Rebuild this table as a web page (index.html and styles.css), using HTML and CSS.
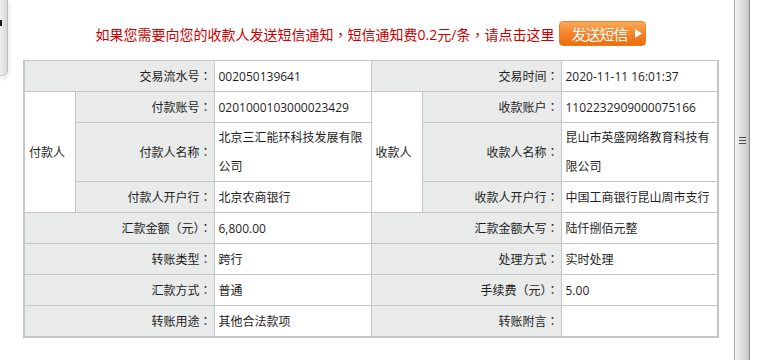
FILE: index.html
```html
<!DOCTYPE html>
<html lang="zh-CN">
<head>
  <meta charset="UTF-8">
  <meta name="viewport" content="width=device-width, initial-scale=1.0">
  <title>转账详情</title>
  <link rel="stylesheet" href="styles.css">
</head>
<body>
  <div class="side"><div class="side-tab"></div></div>

  <div class="page">
    <div class="notice">
      <span class="notice-text">如果您需要向您的收款人发送短信通知<span class="pt">，</span>短信通知费0.2元/条<span class="pt">，</span>请点击这里</span>
      <button class="sms-btn">
        <span>发送短信</span>
        <svg width="7" height="9" viewBox="0 0 7 9"><polygon points="0,0 7,4.5 0,9" fill="#fff"/></svg>
      </button>
    </div>

    <table class="detail">
      <colgroup>
        <col class="c-group"><col class="c-label"><col class="c-value">
        <col class="c-group"><col class="c-label"><col class="c-value">
      </colgroup>
      <tr>
        <th colspan="2">交易流水号<span class="pt">：</span></th><td>002050139641</td>
        <th colspan="2">交易时间<span class="pt">：</span></th><td>2020-11-11 16:01:37</td>
      </tr>
      <tr>
        <td class="party" rowspan="3">付款人</td><th>付款账号<span class="pt">：</span></th><td>0201000103000023429</td>
        <td class="party" rowspan="3">收款人</td><th>收款账户<span class="pt">：</span></th><td>1102232909000075166</td>
      </tr>
      <tr>
        <th>付款人名称<span class="pt">：</span></th><td>北京三汇能环科技发展有限公司</td>
        <th>收款人名称<span class="pt">：</span></th><td>昆山市英盛网络教育科技有限公司</td>
      </tr>
      <tr>
        <th>付款人开户行<span class="pt">：</span></th><td>北京农商银行</td>
        <th>收款人开户行<span class="pt">：</span></th><td>中国工商银行昆山周市支行</td>
      </tr>
      <tr>
        <th colspan="2">汇款金额<span class="pt">（</span>元<span class="pt">）：</span></th><td>6,800.00</td>
        <th colspan="2">汇款金额大写<span class="pt">：</span></th><td>陆仟捌佰元整</td>
      </tr>
      <tr>
        <th colspan="2">转账类型<span class="pt">：</span></th><td>跨行</td>
        <th colspan="2">处理方式<span class="pt">：</span></th><td>实时处理</td>
      </tr>
      <tr>
        <th colspan="2">汇款方式<span class="pt">：</span></th><td>普通</td>
        <th colspan="2">手续费<span class="pt">（</span>元<span class="pt">）：</span></th><td>5.00</td>
      </tr>
      <tr>
        <th colspan="2">转账用途<span class="pt">：</span></th><td>其他合法款项</td>
        <th colspan="2">转账附言<span class="pt">：</span></th><td></td>
      </tr>
    </table>

    <div class="actions">
      <button class="back-btn"></button>
    </div>
  </div>

  <div class="vbar"><span class="grip"></span></div>
  <div class="gutter"></div>
</body>
</html>
```

FILE: styles.css
```css
/* 基础 */
* {
  box-sizing: border-box;
}

body {
  margin: 0;
  height: 360px;
  overflow: hidden;
  display: flex;
  font-family: "Open Sans", "Noto Sans CJK SC", sans-serif;
  font-size: 12px;
  color: #1e1e1e;
  background: #fff;
}

/* 全角标点居中 */
.pt {
  font-family: "Noto Sans CJK TC", "Noto Sans CJK SC", sans-serif;
  font-feature-settings: "locl" 0;
}

/* 左侧折叠条 */
.side {
  width: 8px;
  flex: none;
}

.side-tab {
  position: relative;
  height: 76px;
  background: linear-gradient(to right, #f0f0f0, #d8d8d8);
  border-right: 1px solid #bdbdbd;
  border-bottom: 1px solid #c9c9c9;
  border-radius: 0 0 6px 0;
  box-shadow: 1px 3px 4px rgba(0, 0, 0, 0.1);
}

.side-tab::before {
  content: "";
  position: absolute;
  left: 0;
  top: 20px;
  width: 2px;
  height: 6px;
  background: #1a1a1a;
}

/* 主体 */
.page {
  flex: 1;
  padding-top: 21px;
}

.notice {
  display: flex;
  justify-content: center;
  align-items: center;
  gap: 5px;
  height: 25px;
}

.notice-text {
  color: #cc0000;
  font-size: 14px;
}

.sms-btn {
  display: flex;
  align-items: center;
  gap: 8px;
  width: 87px;
  height: 25px;
  padding: 0 0 0 11px;
  border: 1px solid #ec7f22;
  border-radius: 4px;
  background: linear-gradient(#f9aa58, #f5832a 50%, #ef6c0c);
  color: #fff;
  font-family: inherit;
  font-size: 15px;
  letter-spacing: -1px;
  cursor: pointer;
}

/* 明细表 */
.detail {
  width: 696px;
  margin: 14px auto 0;
  border-collapse: collapse;
  table-layout: fixed;
  border: 2px solid #c6c6c6;
  border-top-width: 1px;
}

.c-group { width: 51px; }
.c-label { width: 139px; }
.c-value { width: 157px; }

.detail th,
.detail td {
  border: 1px solid #c6c6c6;
  padding: 0 4px;
  line-height: 29px;
  font-weight: normal;
  vertical-align: middle;
}

.detail th {
  background: #e9eaea;
  text-align: right;
  padding-right: 2px;
}

.detail td {
  background: #fff;
  text-align: left;
}

/* 底部按钮 */
.actions {
  display: flex;
  justify-content: center;
  margin-top: 25px;
}

.back-btn {
  width: 128px;
  height: 30px;
  border: 2px solid #e8a53c;
  border-radius: 10px;
  background: linear-gradient(#fde49a, #fbc84e);
  cursor: pointer;
}

/* 右侧滚动条 */
.vbar {
  width: 16px;
  flex: none;
  display: flex;
  justify-content: center;
  padding-top: 137px;
  border-left: 1px solid #a9a9a9;
  border-right: 1px solid #8f8f8f;
  background: linear-gradient(to right, #f4f4f4, #e2e2e2 40%, #d0d0d0 85%, #bdbdbd);
}

.grip {
  width: 7px;
  height: 8px;
  background: repeating-linear-gradient(#4a4a4a 0 1px, transparent 1px 3px);
}

.gutter {
  width: 21px;
  flex: none;
}
```
